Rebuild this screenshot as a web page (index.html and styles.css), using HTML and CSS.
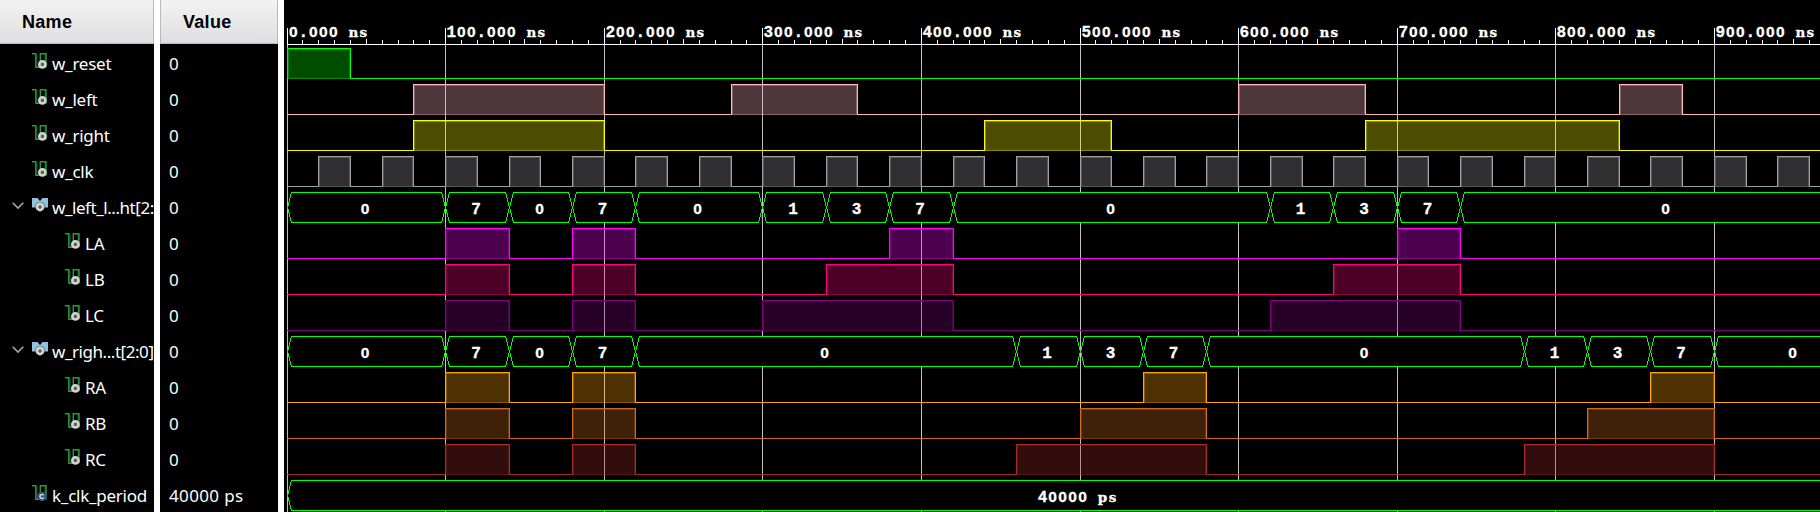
FILE: index.html
```html
<!DOCTYPE html>
<html lang="en">
<head>
<meta charset="utf-8">
<title>Waveform</title>
<link rel="stylesheet" href="styles.css">
</head>
<body>
<svg class="defs" aria-hidden="true">
  <symbol id="wire" viewBox="0 0 16 17">
    <path d="M5 1.200V15M13 1.200v8" fill="none" stroke="#14501f" stroke-width="1.200"/>
    <path d="M0 .7h3.800V14.300h4.500V.7h5.700V14.400" fill="none" stroke="#2f9a45" stroke-width="1.400"/>
  </symbol>
  <symbol id="signal" viewBox="0 0 16 17">
    <use href="#wire" width="16" height="17"/>
    <circle cx="10.400" cy="11.400" r="3.100" fill="#606060" stroke="#d4d4d4" stroke-width="2.600"/>
  </symbol>
  <symbol id="const" viewBox="0 0 16 17">
    <use href="#wire" width="16" height="17"/>
    <circle cx="10" cy="11.400" r="4.700" fill="#3c5688"/>
    <path d="M11.600 10.300a2 2 0 1 0 0 2.300" fill="none" stroke="#fff" stroke-width="1.100"/>
  </symbol>
  <symbol id="bus" viewBox="0 0 16 17">
    <path d="M0 1h5.500L8 4l2.500-3H16v9.500H0z" fill="#92c1d9"/>
    <circle cx="8" cy="10" r="5.200" fill="#000" fill-opacity=".35"/>
    <circle cx="8" cy="10" r="3.100" fill="#606060" stroke="#d4d4d4" stroke-width="2.600"/>
  </symbol>
</svg>
<div class="viewer">
  <section class="column names">
    <h2 class="head">Name</h2>
    <ul class="rows" id="names"></ul>
  </section>
  <section class="column values">
    <h2 class="head">Value</h2>
    <ul class="rows" id="values"></ul>
  </section>
  <svg class="wave" id="wave" width="1536" height="512" viewBox="284 0 1536 512"></svg>
</div>
<script src="wave.js"></script>
</body>
</html>
```
FILE: styles.css
```css
* { box-sizing: border-box; }
body { margin: 0; background: #fff; overflow: hidden; }
.defs { display: none; }
.viewer { display: flex; gap: 6px; width: 1820px; height: 512px; overflow: hidden; background: #fff; }
.column { flex: none; height: 512px; overflow: hidden; background: #000; color: #fff; font: 17px/36px "Noto Sans", "Open Sans", sans-serif; letter-spacing: -0.25px; }
.names { width: 154px; }
.values { width: 118px; letter-spacing: 0.35px; }
.head { height: 44px; margin: 0; border: solid #b9babb; border-width: 0 1px 1px 0; background: linear-gradient(#f2f2f2, #dfdfe1); color: #000; font: bold 18px/44px "Liberation Sans", Arial, sans-serif; letter-spacing: 0.3px; }
.names .head { padding-left: 22px; }
.values .head { padding-left: 22px; border-left-width: 1px; }
.rows { margin: 0; padding: 0; list-style: none; }
.row { display: flex; align-items: center; height: 36px; white-space: pre; }
.names .row { padding-left: 12px; }
.names .row.child { padding-left: 45px; }
.names .row.vector { letter-spacing: -0.45px; }
.values .row { padding-left: 9px; }
.label { height: 36px; line-height: 39px; }
.chevron { flex: none; width: 12px; height: 8px; margin: 0 8px 0 0; }
.icon { flex: none; width: 16px; height: 17px; margin: 0 4px 1px 0; }
.wave { flex: none; display: block; background: #000; }
.mono { fill: #fff; stroke: #fff; stroke-width: 0.3; font: bold 16px "Liberation Mono", monospace; text-anchor: middle; }
.zero { font-family: "Liberation Sans", sans-serif; font-size: 15.5px; }
.unit { font-family: "DejaVu Serif", serif; font-size: 13.5px; }
.ruler { fill: #fff; }
.grid { fill: #c0c0c0; }
.bus { fill: #000; stroke: #0f0; shape-rendering: crispEdges; }
```
FILE: wave.js
```javascript
const signals = [
  { name: 'w_reset', color: '#00ff00', high: [[0, 40]] },
  { name: 'w_left', color: '#ffb6c1', high: [[80, 200], [280, 360], [600, 680], [840, 880]] },
  { name: 'w_right', color: '#ffff00', high: [[80, 200], [440, 520], [680, 840]] },
  { name: 'w_clk', color: '#a0a0a4', high: Array.from({ length: 24 }, (_, i) => [20 + 40 * i, 40 + 40 * i]) },
  { name: 'w_left_l...ht[2:', bus: [[0, '0'], [100, '7'], [140, '0'], [180, '7'], [220, '0'], [300, '1'], [340, '3'], [380, '7'], [420, '0'], [620, '1'], [660, '3'], [700, '7'], [740, '0']] },
  { name: 'LA', child: true, color: '#ff00ff', high: [[100, 140], [180, 220], [380, 420], [700, 740]] },
  { name: 'LB', child: true, color: '#ff007f', high: [[100, 140], [180, 220], [340, 420], [660, 740]] },
  { name: 'LC', child: true, color: '#800080', high: [[100, 140], [180, 220], [300, 420], [620, 740]] },
  { name: 'w_righ...t[2:0]', bus: [[0, '0'], [100, '7'], [140, '0'], [180, '7'], [220, '0'], [460, '1'], [500, '3'], [540, '7'], [580, '0'], [780, '1'], [820, '3'], [860, '7'], [900, '0']] },
  { name: 'RA', child: true, color: '#ffa500', high: [[100, 140], [180, 220], [540, 580], [860, 900]] },
  { name: 'RB', child: true, color: '#d2691e', high: [[100, 140], [180, 220], [500, 580], [820, 900]] },
  { name: 'RC', child: true, color: '#a52a2a', high: [[100, 140], [180, 220], [460, 580], [780, 900]] },
  { name: 'k_clk_period', constant: true, value: '40000 ps', bus: [[0, '40000 ps']] }
];

const chevron = '<svg class="chevron" viewBox="0 0 12 8"><path d="M.7 .8 6 6.100l5.300-5.300" fill="none" stroke="#a8a8a8" stroke-width="1.600"/></svg>';
const gap = '<span class="chevron"></span>';

document.getElementById('names').innerHTML = signals.map(s => {
  const expandable = s.bus && !s.constant;
  const icon = s.constant ? 'const' : expandable ? 'bus' : 'signal';
  return `<li class="row${s.child ? ' child' : ''}${expandable ? ' vector' : ''}">${expandable ? chevron : gap}` +
    `<svg class="icon"><use href="#${icon}"/></svg><span class="label">${s.name}</span></li>`;
}).join('');

document.getElementById('values').innerHTML = signals.map(s =>
  `<li class="row"><span class="label">${s.value || '0'}</span></li>`).join('');

const xAt = ns => Math.floor(287.02 + ns * 1.586);
const rect = (x, y, w, h, attrs) => `<rect x="${x}" y="${y}" width="${w}" height="${h}" ${attrs}/>`;

// Fixed-pitch text: every character is centred in a 10px cell.
function cells(text, firstCentre, baseline) {
  let out = '';
  [...text].forEach((c, i) => {
    const cls = c === '0' ? 'zero' : /[a-z]/.test(c) ? 'unit' : '';
    out += `<tspan x="${firstCentre + 10 * i}"${cls ? ` class="${cls}"` : ''}>${c}</tspan>`;
  });
  return `<text class="mono" xml:space="preserve" y="${baseline}">${out}</text>`;
}

let art = '';
for (let t = 0; t < 970; t += 10) {
  const x = xAt(t);
  if (t % 100 === 0) {
    art += rect(x, 28, 1, 16, 'class="ruler"') + rect(x, 45, 1, 467, 'class="grid"');
    art += cells(`${t}.000 ns`, x + 6.3, 37);
  } else {
    const top = t % 50 === 0 ? 39 : 40;
    art += rect(x, top, 1, 44 - top, 'class="ruler"');
  }
}
art += rect(287, 44, 1533, 1, 'class="ruler"');

signals.forEach((s, i) => {
  const top = 48 + 36 * i;
  const base = top + 30;
  if (s.bus) {
    s.bus.forEach(([start, text], n) => {
      const a = xAt(start) + 0.5;
      const b = xAt(n + 1 < s.bus.length ? s.bus[n + 1][0] : 1000) + 0.5;
      art += `<path class="bus" d="M${a} ${top + 15.5}L${a + 4} ${top + 0.5}H${b - 4}L${b} ${top + 15.5}L${b - 4} ${base + 0.5}H${a + 4}Z"/>`;
      art += cells(text, (a + b) / 2 - 1.5 - 5.2 * (text.length - 1), top + 21.5);
    });
    return;
  }
  const paint = `fill="${s.color}"`;
  let x = 287;
  s.high.forEach(([from, to]) => {
    const a = xAt(from);
    const b = xAt(to);
    art += rect(x, base, a - x, 1, paint);
    art += rect(a, top, b - a + 1, 31, `${paint} fill-opacity=".3"`);
    art += `<path d="M${a + 1.5} ${base + 0.5}V${top + 1.5}H${b - 0.5}V${base + 0.5}Z" fill="none" stroke="${s.color}" stroke-opacity=".35"/>`;
    art += rect(a, top, b - a + 1, 1, paint) + rect(a, top, 1, 31, paint) + rect(b, top, 1, 31, paint);
    x = b;
  });
  art += rect(x, base, 1820 - x, 1, paint);
});
document.getElementById('wave').innerHTML = art;
```
